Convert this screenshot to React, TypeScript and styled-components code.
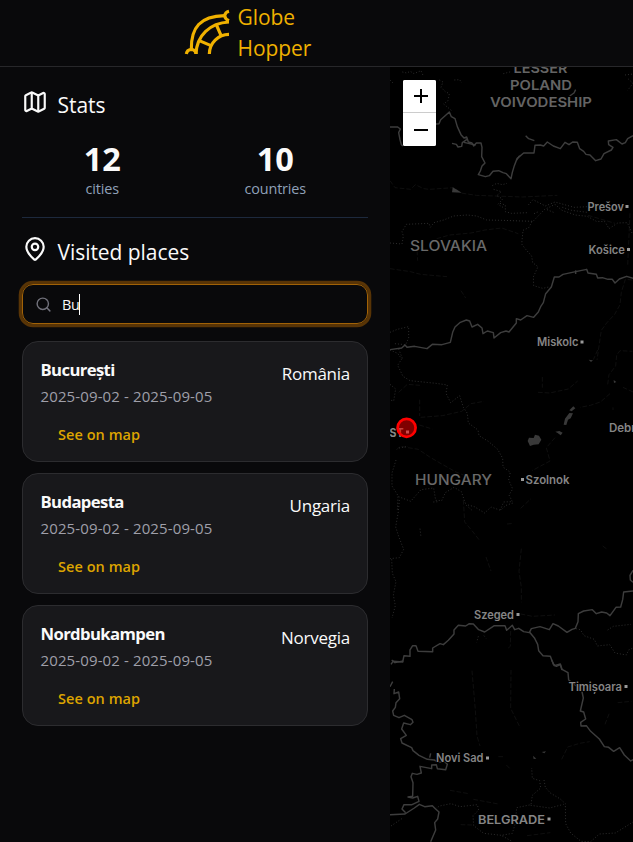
import React from "react";
import styled, { createGlobalStyle } from "styled-components";
import { Map as MapIcon, MapPin, Search } from "lucide-react";

const GlobalStyle = createGlobalStyle`
  * { box-sizing: border-box; }
  body {
    margin: 0;
    background: #09090b;
    color: #fafafa;
    font-family: "Open Sans", "Noto Sans", sans-serif;
    overflow: hidden;
  }
`;

const Page = styled.div`
  display: flex;
  flex-direction: column;
  width: 633px;
  height: 842px;
`;

const Header = styled.header`
  display: flex;
  height: 67px;
  flex: none;
  border-bottom: 1px solid #27272a;
  padding: 2px 0 0 184px;
  gap: 7.5px;
`;

const Brand = styled.div`
  width: 90px;
  color: #f0b100;
  font-size: 21px;
  line-height: 31px;
  letter-spacing: -0.05px;
`;

const LogoMark = styled.svg`
  width: 46px;
  height: 50px;
  margin-top: 5px;
  flex: none;
`;

const Body = styled.main`
  display: flex;
  flex: 1;
  min-height: 0;
`;

const Sidebar = styled.aside`
  width: 390px;
  padding: 22px 22px 0;
  flex: none;
`;

const SectionTitle = styled.h2`
  display: flex;
  gap: 9.5px;
  margin: 0;
  height: 32px;
  font-size: 21px;
  font-weight: 400;
  line-height: 32px;
  letter-spacing: -0.05px;
  svg { flex: none; }
`;

const Stats = styled.div`
  display: grid;
  grid-template-columns: 1fr 1fr;
  height: 97px;
  padding: 16px 0 0;
  border-bottom: 1px solid #1d293d;
  margin-bottom: 18px;
  text-align: center;
`;

const Stat = styled.div`
  display: flex;
  flex-direction: column;
  padding-right: 12.5px;
`;

const StatValue = styled.strong`
  font-size: 32.5px;
  line-height: 44px;
  font-weight: 700;
  letter-spacing: -0.2px;
`;

const StatLabel = styled.span`
  color: #90a1b9;
  font-size: 14.4px;
  line-height: 16px;
  letter-spacing: -0.15px;
`;

const SearchField = styled.div`
  display: flex;
  align-items: center;
  height: 40px;
  margin: 16px 0 17px;
  padding: 0 12px;
  border: 1px solid #a16207;
  border-radius: 11px;
  box-shadow: 0 0 0 3.3px #583406;
  font-size: 14.4px;
  letter-spacing: -0.4px;
`;

const Query = styled.span`
  margin-left: 10px;
  padding-top: 1px;
`;

const Caret = styled.i`
  width: 1px;
  height: 21px;
  background: #fff;
`;

const Cards = styled.div`
  display: flex;
  flex-direction: column;
  gap: 11px;
`;

const Card = styled.article`
  display: flex;
  justify-content: space-between;
  height: 121px;
  padding: 16px 17px 16px 17.5px;
  background: #18181b;
  border: 1px solid #2c2c2f;
  border-radius: 16px;
`;

const City = styled.h3`
  margin: 0;
  font-size: 16.7px;
  line-height: 24px;
  font-weight: 700;
  letter-spacing: -0.62px;
`;

const Dates = styled.p`
  margin: 0;
  padding-top: 3px;
  color: #9f9fa9;
  font-size: 15px;
  line-height: 22px;
  letter-spacing: 0.12px;
  white-space: nowrap;
`;

const MapLink = styled.button`
  display: block;
  margin: 17px 0 0 17.5px;
  padding: 0;
  border: 0;
  background: none;
  color: #dda400;
  font: 600 14.5px/22px "Open Sans", "Noto Sans", sans-serif;
  letter-spacing: 0.05px;
`;

const Country = styled.span`
  margin-top: 3px;
  font-size: 17px;
  line-height: 26px;
  letter-spacing: -0.25px;
`;

const MapPane = styled.section`
  position: relative;
  width: 243px;
  background: #000;
  overflow: hidden;
`;

const MapCanvas = styled.svg`
  display: block;
  width: 243px;
  height: 775px;
`;

const ZoomControl = styled.div`
  position: absolute;
  top: 13px;
  left: 13px;
  width: 33px;
  height: 66px;
  background: #fff;
  border-radius: 2px;
  overflow: hidden;
`;

const ZoomButton = styled.button`
  display: flex;
  align-items: center;
  justify-content: center;
  width: 33px;
  height: 33px;
  padding: 0 0 0 2px;
  border: 0;
  background: #fff;
  &:first-child { border-bottom: 1px solid #ccc; }
`;

type Sheet = { y: number; borders: string[]; regions: string[]; faint: string[]; lakes?: string[] };

const sheets: Sheet[] = [
  {
    y: 60,
    borders: [
      "M15 201 L38 201 46 207 41 218 45 239 49 254 54 258",
      "M153 192 L162 191 167 179 193 156 199 170 210 176 217 200 228 224 237 234 245 231 250 246 261 249 266 258 274 249 288 249 291 262 290 290 300 309 291 318 286 333 280 344 301 350 313 347 324 334 341 332 354 338 364 341 378 356 382 337 388 317 396 296 416 279 447 279 450 256 466 255 476 258 487 246 505 258 526 266 540 247 552 254 563 246 577 247 584 266 596 274 603 283 615 285 632 302 648 297 657 281 679 270 684 262 671 254 670 243 694 239 711 252 721 248 728 236 744 227",
      "M201 250 L214 253 219 261 230 259 232 248 246 238 M237 247 L272 255 M422 227 L431 236 448 242",
      "M572 89 L567 99 554 108 M394 301 L404 287",
    ],
    regions: ["M52 36 L65 39 76 34 87 41 108 32 114 46 M163 60 L174 66 168 82 181 95 193 101 189 122 176 132 199 151 M208 60 L224 59 230 69 M355 41 L378 35 M720 45 L744 42 M730 57 L744 70 728 91 M15 60 L25 70 M322 377 L335 370 352 374 366 370 M326 388 L349 395 335 407 353 417 339 433 357 444 M430 435 L444 419 481 438 510 426 567 442 609 440"],
    faint: ["M15 362 L30 383 77 388 91 374 116 386 133 388 205 383 227 399 274 406 412 411 517 406"],
    lakes: ["M203 382 L216 389 230 398 201 397Z"],
  },
  {
    y: 200,
    borders: [
      "M15 449 L50 444 60 435 66 442 89 439 126 446 142 433 171 434 196 427 203 397 210 381 226 367 244 360 254 363 261 381 278 373 291 384 294 401 307 393 325 398 327 414 347 398 363 393 372 396 394 369 394 356 407 360 426 347 446 352 460 336 467 320 475 308 482 281 499 261 508 231 522 231 534 223 572 215 605 208 609 219 634 223 638 234 652 233 669 238 682 238 690 249 703 237 725 229 744 235",
      "M572 211 L572 222",
    ],
    regions: [
      "M15 129 L51 132 55 108 51 95 64 73 132 70 136 82 147 68 176 60 206 48 246 45 275 48 305 60 350 61 411 63 444 64 478 29 510 13 531 31 571 45 607 49 634 64 660 65 672 86 698 69 727 68 741 99",
      "M441 65 L431 83 414 91 410 132 423 149 440 168 443 188 459 200 445 231 446 257 473 265 496 260 M345 10 L361 15 361 35 379 40 430 38 M447 41 L463 34 M486 29 L508 38 M532 22 L560 31 607 37",
      "M15 397 L37 388 71 380 71 414 62 434 29 431 M41 447 L54 480",
    ],
    faint: ["M155 116 L194 105 258 99 300 90 350 84 400 101 M95 132 L98 182 M15 206 L76 215 107 223 186 230 M228 272 L242 294 M609 46 L643 56 690 70 M742 240 L721 238 709 277 705 314 689 343 665 369 649 391 642 438 636 480 M735 40 L728 198"],
  },
  {
    y: 350,
    borders: [],
    regions: [
      "M15 0 L38 10 50 27 38 46 54 79 75 92 153 100 187 105 183 130 197 158 224 137 235 172 247 190 250 219 279 240 282 257 310 274 338 298 353 325 354 351 376 367 371 390 383 417 372 435 382 455 356 456 346 480",
      "M15 103 L32 117 26 153 15 150 M33 330 L21 369 21 408 41 440 77 454 108 419 146 414 152 451 170 452 181 428 207 412 229 425 243 465 260 480 M42 294 L69 289 M39 440 L37 480",
    ],
    faint: ["M104 149 L104 198 M107 202 L172 197 230 184 258 161 297 154 M34 300 L45 289 100 298 134 321 170 342 213 366 245 379 M41 127 L67 103 105 106 M472 81 L472 113 M459 127 L494 129 550 117 578 93 M638 0 L625 29 M675 131 L646 156 616 166 585 172 M668 103 L672 74 692 48 695 15 705 2 742 4 M684 172 L684 180 M103 225 L142 237 M510 263 L484 293 495 333 441 362 M744 126 L714 112 M407 475 L438 446"],
    lakes: ["M432 263 L446 264 450 254 462 257 469 269 461 283 446 284 435 288 428 273Z", "M565 169 L571 175 560 184 553 181Z", "M553 189 L564 190 557 205 549 209 544 225 536 224 540 206Z", "M511 245 L523 243 533 248 527 256 518 249Z", "M611 29 L624 31 618 36Z", "M686 90 L694 96 687 99Z"],
  },
  {
    y: 500,
    borders: [
      "M18 493 L24 484 53 486 57 467 75 469 75 450 83 437 93 437 99 454 143 455 143 444 165 431 175 434 190 421 207 402 207 390 220 376 242 378 253 371 265 372 281 389 299 396 328 377 360 377 365 391 382 376 389 389 401 385 416 395 433 398 439 386 465 380 493 389 504 371 520 378 546 397 561 388 571 385 579 365 580 341 596 333 622 329 634 341 650 336 665 339 675 347 693 322 707 321 713 299 716 276 744 273",
      "M434 397 L449 415 458 433 461 452 474 467 496 469 505 493 514 499 526 494 531 510",
      "M744 211 L735 226 736 240 744 247",
    ],
    regions: [
      "M43 0 L40 35 32 81 42 112 56 148 43 173 15 176 M20 178 L22 220 33 245 25 285 31 317 21 354 M145 6 L163 5 M249 15 L268 20 299 39 318 21 347 31 363 16 384 9",
      "M573 386 L586 389 597 407 628 418 637 438 674 434 690 459 724 465 731 450 744 444 M668 390 L685 379 738 373 M280 409 L275 427 M297 407 L303 415 M105 86 L108 112",
    ],
    faint: ["M235 0 L239 66 261 92 282 119 M303 171 L318 213 M366 72 L386 70 M409 146 L402 214 409 262 409 307 M407 342 L442 349 510 345 M377 393 L376 439 366 447 M653 138 L668 149"],
  },
  {
    y: 660,
    borders: [
      "M15 80 L23 65 M28 87 L27 101 41 96 44 116 33 128 31 142 23 153 26 166 42 173 58 166 81 179 84 187 76 194 56 189 50 207 64 226 47 236 51 249 80 263 84 272 102 286 127 298 148 300 159 306 180 306 187 313 182 329 157 326 154 314 140 315 140 326 105 319 109 339 96 343 82 340 78 350 84 368 83 409 69 411 83 414 98 409 102 424 81 434 57 434 51 447 62 458",
      "M15 464 L60 462 88 444 103 433 119 440 142 437 151 446 162 456 158 477 149 488 152 510 137 545",
      "M500 0 L508 17 526 12 531 28 549 38 551 60 574 78 590 90 595 114 586 153 596 156 602 177 587 187 588 198 604 197 617 214 643 237 658 260 671 262 686 274 704 263 718 285 737 303 744 299",
      "M20 0 L30 8 55 3 M137 280 L134 293",
    ],
    regions: [
      "M151 446 L164 438 198 431 225 440 277 434 281 450 264 467 266 497 296 520 350 526 382 520 391 490 395 443 438 434 442 406 467 384 464 362 442 355 440 324",
      "M477 360 L481 382 496 399 526 417 541 431 542 491 557 519 588 544 617 545 643 522 691 519 717 503 744 486 M18 498 L52 475 M352 528 L383 545 M437 436 L494 444 536 433",
    ],
    faint: ["M261 32 L271 150 276 228 285 258 M378 30 L377 145 406 204 M195 391 L251 401 M265 418 L340 432 M530 298 L548 261 584 250 614 245 M660 193 L674 157 M698 128 L739 124 M227 494 L262 495 M426 527 L496 518 M340 290 L358 290 M364 315 L377 328"],
    lakes: ["M444 287 L454 296 446 297Z", "M470 276 L483 274 478 280Z"],
  },
];

type Place = { text: string; x: number; y: number; w: number; size: number; weight: number; color: string; dot?: [number, number] };

const places: Place[] = [
  { text: "LESSER", x: 513.5, y: 73, w: 54, size: 13.5, weight: 600, color: "#646464" },
  { text: "POLAND", x: 510, y: 90, w: 62, size: 13.5, weight: 600, color: "#646464" },
  { text: "VOIVODESHIP", x: 490, y: 107, w: 102, size: 13.5, weight: 600, color: "#646464" },
  { text: "Prešov", x: 587.5, y: 211, w: 36.5, size: 11.3, weight: 600, color: "#858585", dot: [627, 206.5] },
  { text: "SLOVAKIA", x: 410, y: 251, w: 77, size: 14, weight: 500, color: "#696969" },
  { text: "Košice", x: 588.5, y: 253.5, w: 36.5, size: 11.3, weight: 600, color: "#858585", dot: [628.5, 249.5] },
  { text: "Miskolc", x: 537, y: 346, w: 41.5, size: 11.3, weight: 600, color: "#858585", dot: [582, 342] },
  { text: "ST", x: 389.5, y: 437, w: 14, size: 12, weight: 700, color: "#858585", dot: [407.5, 432] },
  { text: "Debrecen", x: 609, y: 431.5, w: 54, size: 11.3, weight: 600, color: "#858585" },
  { text: "HUNGARY", x: 415, y: 484.5, w: 77, size: 14, weight: 500, color: "#696969" },
  { text: "Szolnok", x: 525.5, y: 484, w: 44, size: 11.3, weight: 600, color: "#858585", dot: [522.5, 479.5] },
  { text: "Szeged", x: 474, y: 618.5, w: 40, size: 11.3, weight: 600, color: "#858585", dot: [518, 614.5] },
  { text: "Timișoara", x: 568.5, y: 690.5, w: 53.5, size: 11.3, weight: 600, color: "#858585", dot: [626, 686.5] },
  { text: "Novi Sad", x: 436, y: 762, w: 47.5, size: 11.3, weight: 600, color: "#858585", dot: [487.5, 758] },
  { text: "BELGRADE", x: 478, y: 823.5, w: 67, size: 12.3, weight: 600, color: "#858585", dot: [549, 819] },
];

function WorldMap() {
  return (
    <MapCanvas viewBox="390 67 243 775" fill="none" strokeLinejoin="round">
      {sheets.map((s) => (
        <g key={s.y} transform={`translate(385 ${s.y}) scale(0.33333)`}>
          {s.faint.map((d) => <path key={d} d={d} stroke="#171717" strokeWidth="2" strokeDasharray="14 6" />)}
          {s.regions.map((d) => <path key={d} d={d} stroke="#343434" strokeWidth="2.6" strokeDasharray="3 6" />)}
          {s.borders.map((d) => <path key={d} d={d} stroke="#3d3d3d" strokeWidth="4.3" />)}
          {s.lakes?.map((d) => <path key={d} d={d} fill="#393939" />)}
        </g>
      ))}
      {places.map((p) => (
        <g key={p.text} fill={p.color}>
          <text x={p.x} y={p.y} textLength={p.w} lengthAdjust="spacingAndGlyphs" fontFamily="Inter, sans-serif" fontSize={p.size} fontWeight={p.weight} stroke="#000" strokeWidth="2" paintOrder="stroke">
            {p.text}
          </text>
          {p.dot && <rect x={p.dot[0] - 1.5} y={p.dot[1] - 1.5} width="3" height="3" fill="#999" />}
        </g>
      ))}
      <circle cx="406.6" cy="427.8" r="9" fill="#f00" fillOpacity="0.5" stroke="#f00" strokeWidth="2.7" />
    </MapCanvas>
  );
}

function Logo() {
  return (
    <LogoMark viewBox="42 21 138 150" fill="none" stroke="#f0b100" strokeWidth="9.5">
      <path d="M64 148 C63 82 90 49 164 47" />
      <path d="M78 162 C80 106 120 69 177 66" />
      <path d="M118 162 C118 129 145 103 177 103" />
      <path d="M138 72 L153 106 M86 121 L123 137" />
      <path d="M177 34 C169 36 165 40 164 47 C165 54 169 59 177 62" />
      <path d="M49 162 C50 154 56 149 64 148 C72 149 78 154 78 162" />
    </LogoMark>
  );
}

const visits = [
  { city: "București", country: "România" },
  { city: "Budapesta", country: "Ungaria" },
  { city: "Nordbukampen", country: "Norvegia" },
];

export default function App() {
  return (
    <>
      <GlobalStyle />
      <Page>
        <Header>
          <Logo />
          <Brand>Globe Hopper</Brand>
        </Header>
        <Body>
          <Sidebar>
            <SectionTitle><MapIcon size={26} strokeWidth={2} />Stats</SectionTitle>
            <Stats>
              <Stat><StatValue>12</StatValue><StatLabel>cities</StatLabel></Stat>
              <Stat><StatValue>10</StatValue><StatLabel>countries</StatLabel></Stat>
            </Stats>
            <SectionTitle><MapPin size={26} strokeWidth={2} />Visited places</SectionTitle>
            <SearchField>
              <Search size={17} color="#71717b" strokeWidth={2} />
              <Query>Bu</Query>
              <Caret />
            </SearchField>
            <Cards>
              {visits.map((v) => (
                <Card key={v.city}>
                  <div>
                    <City>{v.city}</City>
                    <Dates>2025-09-02 - 2025-09-05</Dates>
                    <MapLink>See on map</MapLink>
                  </div>
                  <Country>{v.country}</Country>
                </Card>
              ))}
            </Cards>
          </Sidebar>
          <MapPane>
            <WorldMap />
            <ZoomControl>
              <ZoomButton aria-label="Zoom in">
                <svg width="14" height="14" viewBox="0 0 14 14"><path d="M0 7h14M7 0v14" stroke="#000" strokeWidth="2" /></svg>
              </ZoomButton>
              <ZoomButton aria-label="Zoom out">
                <svg width="14" height="14" viewBox="0 0 14 14"><path d="M0 7h14" stroke="#000" strokeWidth="2" /></svg>
              </ZoomButton>
            </ZoomControl>
          </MapPane>
        </Body>
      </Page>
    </>
  );
}
